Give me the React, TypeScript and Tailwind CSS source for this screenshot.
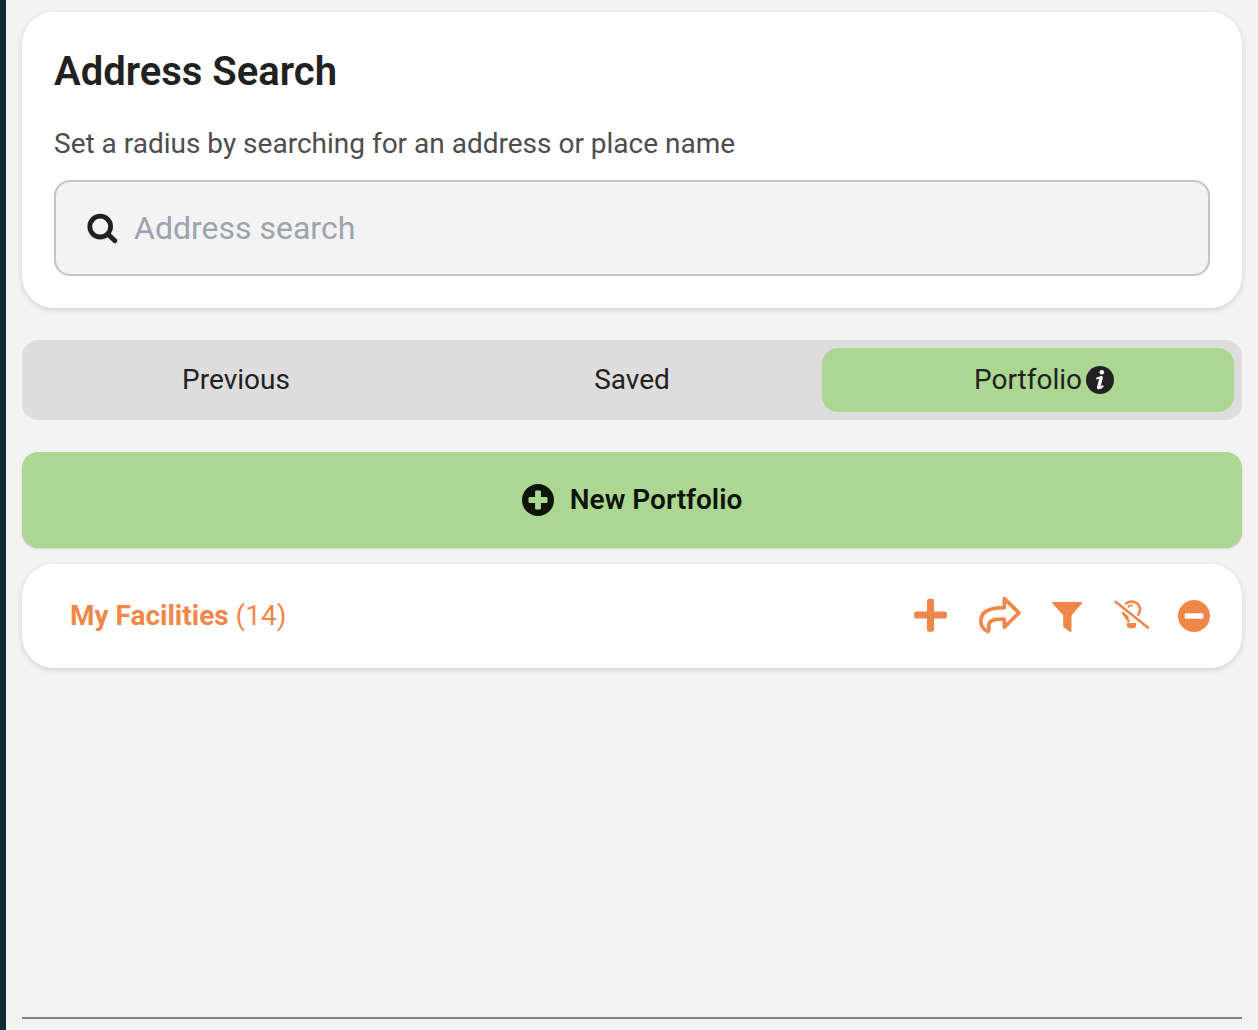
import React from "react";

type IconProps = { className?: string };

function SearchIcon({ className }: IconProps) {
  return (
    <svg viewBox="0 0 32 32" className={className} fill="none" stroke="currentColor" aria-hidden="true">
      <circle cx="14.2" cy="14.6" r="10.4" strokeWidth="4.8" />
      <path d="M22 22.2 28.8 28.8" strokeWidth="4.8" strokeLinecap="round" />
    </svg>
  );
}

function InfoIcon({ className }: IconProps) {
  return (
    <svg viewBox="0 0 28 28" className={className} aria-hidden="true">
      <circle cx="14" cy="14" r="14" fill="#212121" />
      <circle cx="15.8" cy="6.3" r="2.3" fill="white" />
      <path
        d="M11 12.4 15.2 11.3 12.6 21.4C12.5 22.6 14.6 22 16.6 20.2"
        fill="none"
        stroke="white"
        strokeWidth="2"
        strokeLinecap="round"
        strokeLinejoin="round"
      />
      <path d="M15.2 11.6 12.6 21.6" stroke="white" strokeWidth="3.4" strokeLinecap="round" />
    </svg>
  );
}

function PlusCircleIcon({ className }: IconProps) {
  return (
    <svg viewBox="0 0 32 32" className={className} aria-hidden="true">
      <circle cx="16" cy="16" r="16" fill="currentColor" />
      <g fill="#acd793">
        <rect x="13.1" y="6.5" width="5.8" height="19" rx="1.2" />
        <rect x="6.5" y="13.1" width="19" height="5.8" rx="1.2" />
      </g>
    </svg>
  );
}

function MinusCircleIcon({ className }: IconProps) {
  return (
    <svg viewBox="0 0 32 32" className={className} aria-hidden="true">
      <circle cx="16" cy="16" r="16" fill="currentColor" />
      <rect x="6.7" y="13.2" width="18.6" height="5.6" rx="1.3" fill="white" />
    </svg>
  );
}

function PlusIcon({ className }: IconProps) {
  return (
    <svg viewBox="0 0 36 36" className={className} fill="currentColor" aria-hidden="true">
      <rect x="13" y="0.8" width="7" height="33" rx="2.2" />
      <rect x="0" y="13.6" width="33" height="7" rx="2.2" />
    </svg>
  );
}

function ShareIcon({ className }: IconProps) {
  return (
    <svg
      viewBox="0 0 44 40"
      className={className}
      fill="none"
      stroke="currentColor"
      strokeWidth="3.7"
      strokeLinejoin="round"
      strokeLinecap="round"
      aria-hidden="true"
    >
      <path d="M26.3 2.6 41 16.8 26.3 31.2V23C17.5 23 11.5 23.6 10.8 28.6C10.5 31.4 12.2 32.8 9.8 35.6C5 33.2 2.8 29.4 2.8 25C2.8 15.6 12 11.6 26.3 11.6Z" />
    </svg>
  );
}

function FilterIcon({ className }: IconProps) {
  return (
    <svg viewBox="0 0 36 32" className={className} fill="currentColor" aria-hidden="true">
      <path d="M3 2h28.4c.8 0 1.1.9.6 1.5L21.5 15.2V30.8c0 1-.9 1.4-1.7.9L14 27.4c-.5-.4-.8-.8-.8-1.4V15.2L2.4 3.5C1.9 2.9 2.2 2 3 2z" />
    </svg>
  );
}

function BulbOffIcon({ className }: IconProps) {
  return (
    <svg viewBox="0 0 36 32" className={className} fill="none" stroke="currentColor" strokeLinecap="round" aria-hidden="true">
      <path d="M1.6 1.8 33.8 27.6" strokeWidth="2.6" />
      <path d="M12.2 3.4C17.6-.8 26.8 2.4 25.9 10.6C25.7 12.2 25 13.4 24.2 14.6" strokeWidth="2.5" />
      <path d="M14.6 6.6C15.6 5.7 16.8 5.4 17.8 5.3" strokeWidth="2" />
      <path d="M8.8 12.6 13.8 17" strokeWidth="1.8" />
      <path d="M9.4 13.4C11 16.6 13.6 18.4 14.5 21.2" strokeWidth="2.7" />
      <path d="M12.8 23h9.4v2c0 2-1.2 3.2-3 3.2h-3.4c-1.8 0-3-1.2-3-3.2z" fill="currentColor" stroke="none" />
    </svg>
  );
}

function Tab({ selected = false, children }: { selected?: boolean; children: React.ReactNode }) {
  return (
    <button
      type="button"
      role="tab"
      aria-selected={selected}
      className={
        selected
          ? "flex h-16 flex-1 items-center justify-center rounded-2xl bg-[#acd793]"
          : "flex h-16 flex-1 items-center justify-center rounded-2xl"
      }
    >
      {children}
    </button>
  );
}

function IconButton({ label, children }: { label: string; children: React.ReactNode }) {
  return (
    <button type="button" aria-label={label} className="flex items-center justify-center">
      {children}
    </button>
  );
}

export default function App() {
  return (
    <div className="flex min-h-screen flex-col border-l-6 border-[#0e2a33] bg-[#f3f3f3] px-4 pt-3 pb-[11px] font-[Roboto,sans-serif] text-[28px] leading-10 text-[#212121]">
      <main className="flex flex-1 flex-col">
        <section className="rounded-[32px] bg-white p-8 shadow-[0_2px_6px_rgba(0,0,0,0.14)]">
          <h1 className="text-[40px] leading-[56px] font-semibold">Address Search</h1>
          <label htmlFor="address" className="mt-6 block text-[#4d4d4d]">
            Set a radius by searching for an address or place name
          </label>
          <div className="mt-4 flex h-24 items-center gap-4 rounded-2xl border-2 border-[#c4c4c4] bg-[#f3f3f3] px-[30px]">
            <SearchIcon className="size-8 shrink-0" />
            <input
              id="address"
              type="text"
              placeholder="Address search"
              className="min-w-0 flex-1 bg-transparent text-[32px] outline-none placeholder:text-[#9ca3af]"
            />
          </div>
        </section>

        <div role="tablist" aria-label="Searches" className="mt-8 flex -space-x-4 rounded-2xl bg-[#dddddd] p-2">
          <Tab>Previous</Tab>
          <Tab>Saved</Tab>
          <Tab selected>
            <span className="flex items-center gap-1 pl-8">
              Portfolio
              <InfoIcon className="size-7" />
            </span>
          </Tab>
        </div>

        <button
          type="button"
          className="mt-8 flex h-24 items-center justify-center gap-4 rounded-2xl bg-[#acd793] font-semibold text-[#0d140a] shadow-sm"
        >
          <PlusCircleIcon className="size-8" />
          New Portfolio
        </button>

        <section className="mt-4 flex h-[104px] items-center justify-between rounded-[32px] bg-white pr-8 pl-12 text-[#f08748] shadow-[0_2px_6px_rgba(0,0,0,0.14)]">
          <h2>
            <span className="font-bold">My Facilities</span> (14)
          </h2>
          <div className="flex items-center gap-7">
            <IconButton label="Add facility">
              <PlusIcon className="size-9" />
            </IconButton>
            <IconButton label="Share">
              <ShareIcon className="h-10 w-11" />
            </IconButton>
            <IconButton label="Filter">
              <FilterIcon className="h-8 w-9" />
            </IconButton>
            <IconButton label="Turn highlight off">
              <BulbOffIcon className="h-8 w-9" />
            </IconButton>
            <IconButton label="Remove">
              <MinusCircleIcon className="size-8" />
            </IconButton>
          </div>
        </section>
      </main>
      <hr className="border-t-2 border-[#808085]" />
    </div>
  );
}
